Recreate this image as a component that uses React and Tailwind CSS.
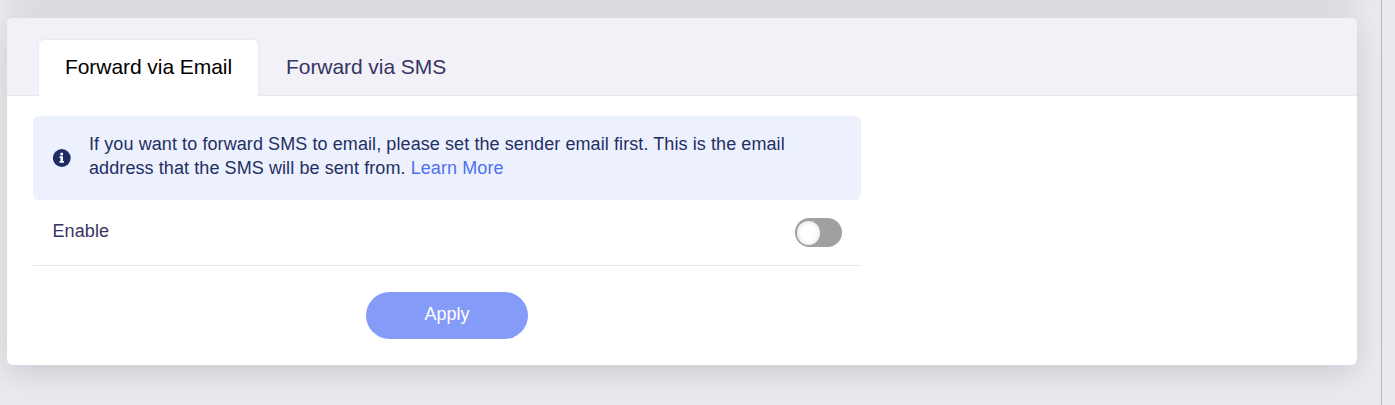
import React from "react";

function Tab({ active, children }) {
  return (
    <button
      className={
        active
          ? "-mb-px h-[57px] w-[221px] whitespace-nowrap rounded-t-[6px] border border-b-0 border-[#ebeaf1] bg-white pb-[3px] text-[21px] leading-[30px] tracking-[-0.06px] text-black"
          : "-mb-px h-[57px] px-[27px] pb-[2px] text-[21px] leading-[30px] tracking-[-0.06px] text-[#363464]"
      }
    >
      {children}
    </button>
  );
}

function InfoIcon() {
  return (
    <svg viewBox="0 0 18 18" className="h-[18px] w-[18px] shrink-0">
      <circle cx="8.8" cy="9" r="8.9" fill="#1f2c63" />
      <circle cx="8.7" cy="5.1" r="1.5" fill="#fff" />
      <path d="M6.6 7.3H10v4.6h1v1.9H6.5v-1.9h1V9.1h-.9z" fill="#fff" />
    </svg>
  );
}

function Notice() {
  return (
    <div className="flex h-[84px] items-center rounded-[6px] bg-[#edf1fe] pl-5">
      <InfoIcon />
      <p className="ml-[18px] w-[730px] pb-[5px] text-[18px] leading-[24px] tracking-[0.088px] text-[#232f63]">
        If you want to forward SMS to email, please set the sender email first. This is the email
        <br />
        address that the SMS will be sent from. <a className="text-[#4f6ff0]">Learn More</a>
      </p>
    </div>
  );
}

export default function App() {
  return (
    <div className="flex h-[405px] w-[1395px] overflow-hidden bg-[#ebeaf0] font-['Liberation_Sans',Arial,sans-serif]">
      <div className="h-[405px] w-[1382px] overflow-hidden border-r border-[#b6b5bb] pl-[7px]">
        <div className="-mt-[200px] h-[200px] w-[1350px] rounded-[6px] bg-white shadow-[0_8px_32px_rgba(0,0,0,0.09)]" />
        <div className="mt-[18px] h-[347px] w-[1350px] rounded-[6px] bg-white shadow-[0_8px_32px_rgba(0,0,0,0.14)]">
          <div className="flex h-[78px] items-end rounded-t-[6px] border-b border-[#e7e7ef] bg-[#f2f1f7] pl-[31px]">
            <Tab active>Forward via Email</Tab>
            <Tab>Forward via SMS</Tab>
          </div>
          <div className="ml-[26px] w-[828px] pt-5">
            <Notice />
            <div className="flex h-[66px] items-center justify-between border-b border-[#e8e8e8] pr-[19px] pl-[19.5px]">
              <span className="pb-1 text-[18px] leading-[24px] tracking-[0.088px] text-[#363464]">Enable</span>
              <button className="flex h-[29px] w-[47px] items-center rounded-full bg-[#a0a0a1] pl-[2px]">
                <span className="h-6 w-[23px] rounded-full bg-white shadow-[inset_0_0_5px_rgba(0,0,0,0.16)]" />
              </button>
            </div>
            <div className="flex justify-center pt-[26px]">
              <button className="h-[47px] w-[162px] rounded-full bg-[#859bf8] pb-[3px] text-[18px] text-white">
                Apply
              </button>
            </div>
          </div>
        </div>
      </div>
    </div>
  );
}
